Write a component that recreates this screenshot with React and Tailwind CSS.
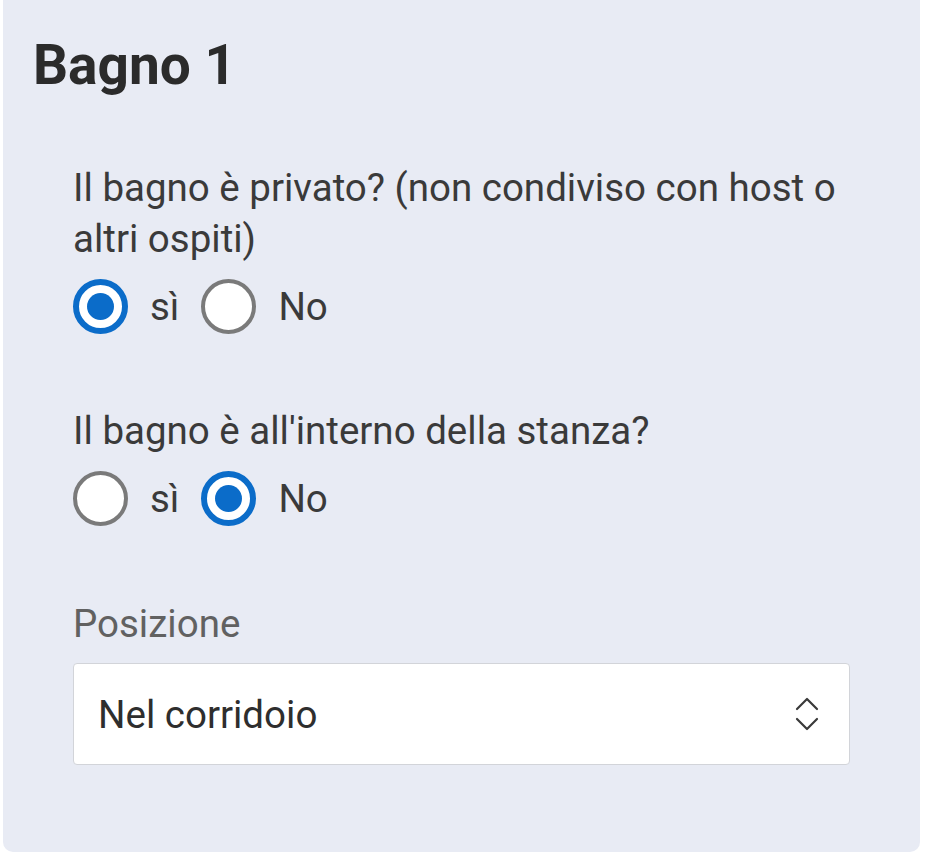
import React, { useState } from 'react';

const Radio = ({ checked, label, onClick }) => (
  <button type="button" onClick={onClick} className="flex items-center gap-[22px]">
    {checked ? (
      <span className="w-[55px] h-[55px] rounded-full border-[6px] border-[#0b6cc9] bg-white flex items-center justify-center">
        <span className="w-[27px] h-[27px] rounded-full bg-[#0b6cc9]" />
      </span>
    ) : (
      <span className="w-[55px] h-[55px] rounded-full border-[4px] border-[#7a7a7a] bg-white" />
    )}
    <span className="text-[38.5px] leading-[51px] text-[#3a3a3a]">{label}</span>
  </button>
);

const YesNo = ({ value, onChange }) => (
  <div className="flex items-center gap-[22px] h-[58px]">
    <Radio checked={value === 'si'} label="sì" onClick={() => onChange('si')} />
    <Radio checked={value === 'no'} label="No" onClick={() => onChange('no')} />
  </div>
);

export default function App() {
  const [privato, setPrivato] = useState('si');
  const [interno, setInterno] = useState('no');

  return (
    <div className="min-h-screen bg-white" style={{ fontFamily: 'Roboto, "Noto Sans", sans-serif' }}>
      <div className="ml-[3px] w-[917px] bg-[#e8ebf4] rounded-b-[10px] pt-[33px] pl-[30px] pb-[87px]">
        {/* Header */}
        <h2 className="text-[55px] leading-[65px] font-bold text-[#2b2b2b]">Bagno 1</h2>

        <div className="ml-[40px] w-[777px]">
          {/* Privato */}
          <p className="mt-[64px] text-[38.5px] leading-[51px] text-[#3a3a3a]">
            Il bagno è privato? (non condiviso con host o altri ospiti)
          </p>
          <div className="mt-[13px]">
            <YesNo value={privato} onChange={setPrivato} />
          </div>

          {/* Interno */}
          <p className="mt-[70px] text-[38.5px] leading-[51px] text-[#3a3a3a]">
            Il bagno è all'interno della stanza?
          </p>
          <div className="mt-[13px]">
            <YesNo value={interno} onChange={setInterno} />
          </div>

          {/* Posizione */}
          <label className="block mt-[71px] text-[38.5px] leading-[51px] text-[#616161]">Posizione</label>
          <div className="mt-[14px] h-[102px] bg-white border-[1.5px] border-[#d2d4d9] rounded-[4px] flex items-center justify-between pl-[24px] pr-[30px]">
            <span className="text-[38.5px] leading-[51px] text-[#2e2e2e]">Nel corridoio</span>
            <svg width="24" height="38" viewBox="0 0 24 38" fill="none" stroke="#3a3a3a" strokeWidth="2.2" strokeLinecap="round" strokeLinejoin="round">
              <path d="M2 14 L12 4 L22 14" />
              <path d="M2 24 L12 34 L22 24" />
            </svg>
          </div>
        </div>
      </div>
    </div>
  );
}
